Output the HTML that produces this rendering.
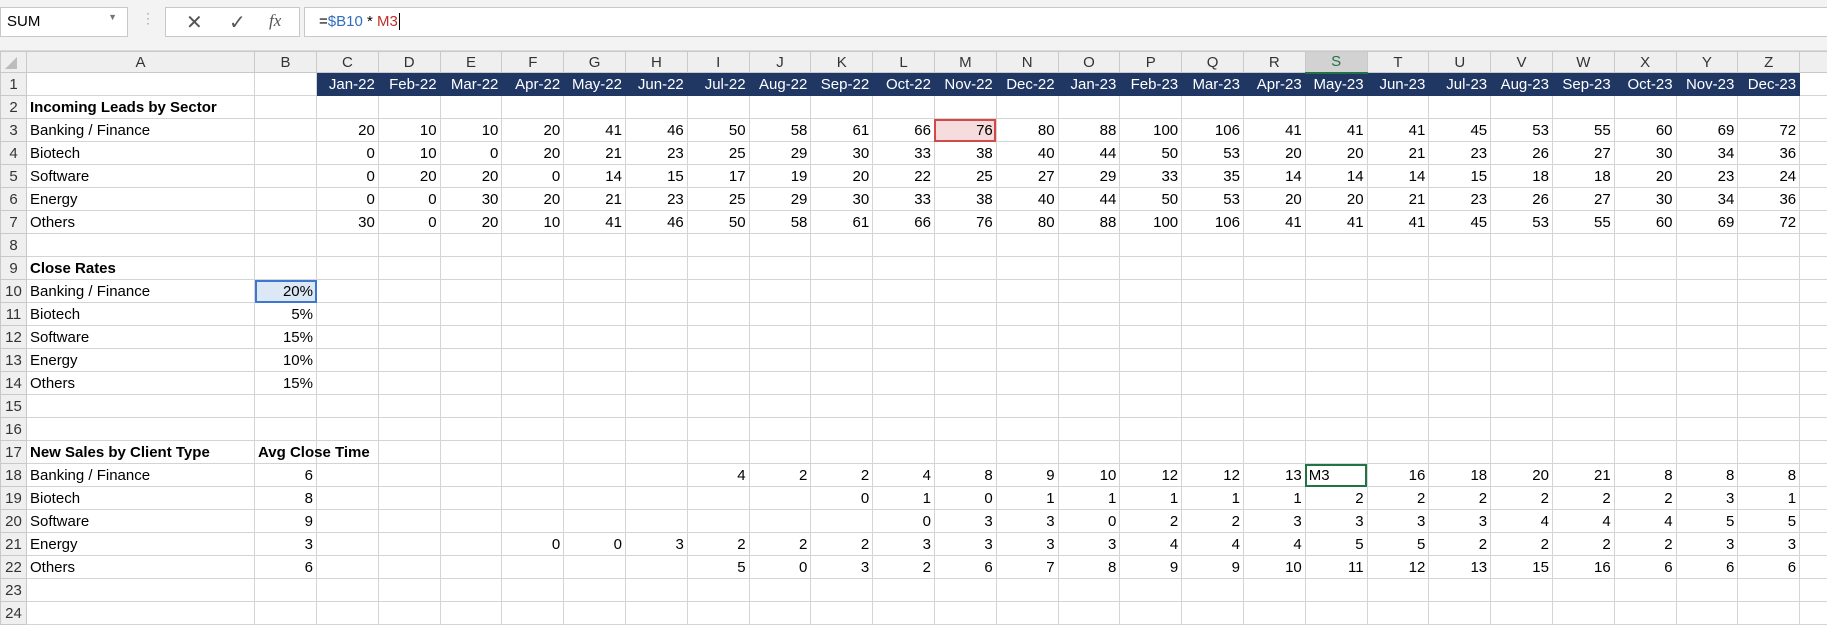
<!DOCTYPE html>
<html><head><meta charset="utf-8"><style>
*{margin:0;padding:0;box-sizing:border-box}
body{width:1827px;height:625px;overflow:hidden;background:#fff;font-family:"Liberation Sans",Calibri,sans-serif;font-size:15px;color:#000;position:relative}
#fb{position:absolute;left:0;top:0;width:1827px;height:51px;background:#f3f3f3;border-bottom:1px solid #dadada}
.box{position:absolute;background:#fff;border:1px solid #c8c8c8;height:30px;top:7px}
table{position:absolute;left:0;top:51px;border-collapse:collapse;table-layout:fixed;width:1827px}
td{border:1px solid #d4d4d4;height:23px;padding:0 3px;white-space:nowrap;overflow:hidden;text-align:right;line-height:21px}
tr.h td{height:21px;line-height:19px;background:#efefef;color:#333;text-align:center;border-color:#c9c9c9}
td.r{background:#efefef;color:#333;text-align:center;padding:0;border-color:#c9c9c9}
td.t{text-align:left}
td.b{font-weight:bold;text-align:left}
td.d{background:#203764;color:#fff;border-color:#203764}
</style></head><body>
<div id="fb">
<div class="box" style="left:0;width:128px"><span style="position:absolute;left:6px;top:5px">SUM</span><span style="position:absolute;right:10px;top:4px;font-size:9px;color:#777">▼</span></div>
<span style="position:absolute;left:141px;top:10px;color:#aaa;font-size:14px">⋮</span>
<div class="box" style="left:165px;width:135px"><span style="position:absolute;left:20px;top:2px;font-size:20px;color:#555">✕</span><span style="position:absolute;left:63px;top:2px;font-size:20px;color:#555">✓</span><span style="position:absolute;left:103px;top:3px;font-size:17px;color:#555;font-style:italic;font-family:'Liberation Serif',serif">fx</span></div>
<div class="box" style="left:304px;width:1530px"><span style="position:absolute;left:14px;top:5px">=<span style="color:#2f6cc0">$B10</span> * <span style="color:#c0302a">M3</span><span style="border-left:1px solid #000;margin-left:1px"></span></span></div>
</div>
<table>
<colgroup><col style="width:26px"><col style="width:228px"><col style="width:62px"><col span="24" style="width:61.8px"><col style="width:28px"></colgroup>
<tr class="h"><td style="padding:0"><svg width="20" height="17" style="display:block"><polygon points="16,3 16,15 4,15" fill="#bdbdbd"/></svg></td><td>A</td><td>B</td><td>C</td><td>D</td><td>E</td><td>F</td><td>G</td><td>H</td><td>I</td><td>J</td><td>K</td><td>L</td><td>M</td><td>N</td><td>O</td><td>P</td><td>Q</td><td>R</td><td style="background:#d2d2d2;border-bottom:2px solid #217346;color:#217346">S</td><td>T</td><td>U</td><td>V</td><td>W</td><td>X</td><td>Y</td><td>Z</td><td></td></tr>
<tr><td class="r">1</td><td></td><td></td><td class="d">Jan-22</td><td class="d">Feb-22</td><td class="d">Mar-22</td><td class="d">Apr-22</td><td class="d">May-22</td><td class="d">Jun-22</td><td class="d">Jul-22</td><td class="d">Aug-22</td><td class="d">Sep-22</td><td class="d">Oct-22</td><td class="d">Nov-22</td><td class="d">Dec-22</td><td class="d">Jan-23</td><td class="d">Feb-23</td><td class="d">Mar-23</td><td class="d">Apr-23</td><td class="d">May-23</td><td class="d">Jun-23</td><td class="d">Jul-23</td><td class="d">Aug-23</td><td class="d">Sep-23</td><td class="d">Oct-23</td><td class="d">Nov-23</td><td class="d">Dec-23</td><td></td></tr>
<tr><td class="r">2</td><td class="b">Incoming Leads by Sector</td><td></td><td></td><td></td><td></td><td></td><td></td><td></td><td></td><td></td><td></td><td></td><td></td><td></td><td></td><td></td><td></td><td></td><td></td><td></td><td></td><td></td><td></td><td></td><td></td><td></td><td></td></tr>
<tr><td class="r">3</td><td class="t">Banking / Finance</td><td></td><td>20</td><td>10</td><td>10</td><td>20</td><td>41</td><td>46</td><td>50</td><td>58</td><td>61</td><td>66</td><td style="background:#f6dcdc;outline:2px solid #d04a4a;outline-offset:-2px">76</td><td>80</td><td>88</td><td>100</td><td>106</td><td>41</td><td>41</td><td>41</td><td>45</td><td>53</td><td>55</td><td>60</td><td>69</td><td>72</td><td></td></tr>
<tr><td class="r">4</td><td class="t">Biotech</td><td></td><td>0</td><td>10</td><td>0</td><td>20</td><td>21</td><td>23</td><td>25</td><td>29</td><td>30</td><td>33</td><td>38</td><td>40</td><td>44</td><td>50</td><td>53</td><td>20</td><td>20</td><td>21</td><td>23</td><td>26</td><td>27</td><td>30</td><td>34</td><td>36</td><td></td></tr>
<tr><td class="r">5</td><td class="t">Software</td><td></td><td>0</td><td>20</td><td>20</td><td>0</td><td>14</td><td>15</td><td>17</td><td>19</td><td>20</td><td>22</td><td>25</td><td>27</td><td>29</td><td>33</td><td>35</td><td>14</td><td>14</td><td>14</td><td>15</td><td>18</td><td>18</td><td>20</td><td>23</td><td>24</td><td></td></tr>
<tr><td class="r">6</td><td class="t">Energy</td><td></td><td>0</td><td>0</td><td>30</td><td>20</td><td>21</td><td>23</td><td>25</td><td>29</td><td>30</td><td>33</td><td>38</td><td>40</td><td>44</td><td>50</td><td>53</td><td>20</td><td>20</td><td>21</td><td>23</td><td>26</td><td>27</td><td>30</td><td>34</td><td>36</td><td></td></tr>
<tr><td class="r">7</td><td class="t">Others</td><td></td><td>30</td><td>0</td><td>20</td><td>10</td><td>41</td><td>46</td><td>50</td><td>58</td><td>61</td><td>66</td><td>76</td><td>80</td><td>88</td><td>100</td><td>106</td><td>41</td><td>41</td><td>41</td><td>45</td><td>53</td><td>55</td><td>60</td><td>69</td><td>72</td><td></td></tr>
<tr><td class="r">8</td><td></td><td></td><td></td><td></td><td></td><td></td><td></td><td></td><td></td><td></td><td></td><td></td><td></td><td></td><td></td><td></td><td></td><td></td><td></td><td></td><td></td><td></td><td></td><td></td><td></td><td></td><td></td></tr>
<tr><td class="r">9</td><td class="b">Close Rates</td><td></td><td></td><td></td><td></td><td></td><td></td><td></td><td></td><td></td><td></td><td></td><td></td><td></td><td></td><td></td><td></td><td></td><td></td><td></td><td></td><td></td><td></td><td></td><td></td><td></td><td></td></tr>
<tr><td class="r">10</td><td class="t">Banking / Finance</td><td style="background:#dde8f6;outline:2px solid #3c78d0;outline-offset:-2px">20%</td><td></td><td></td><td></td><td></td><td></td><td></td><td></td><td></td><td></td><td></td><td></td><td></td><td></td><td></td><td></td><td></td><td></td><td></td><td></td><td></td><td></td><td></td><td></td><td></td><td></td></tr>
<tr><td class="r">11</td><td class="t">Biotech</td><td>5%</td><td></td><td></td><td></td><td></td><td></td><td></td><td></td><td></td><td></td><td></td><td></td><td></td><td></td><td></td><td></td><td></td><td></td><td></td><td></td><td></td><td></td><td></td><td></td><td></td><td></td></tr>
<tr><td class="r">12</td><td class="t">Software</td><td>15%</td><td></td><td></td><td></td><td></td><td></td><td></td><td></td><td></td><td></td><td></td><td></td><td></td><td></td><td></td><td></td><td></td><td></td><td></td><td></td><td></td><td></td><td></td><td></td><td></td><td></td></tr>
<tr><td class="r">13</td><td class="t">Energy</td><td>10%</td><td></td><td></td><td></td><td></td><td></td><td></td><td></td><td></td><td></td><td></td><td></td><td></td><td></td><td></td><td></td><td></td><td></td><td></td><td></td><td></td><td></td><td></td><td></td><td></td><td></td></tr>
<tr><td class="r">14</td><td class="t">Others</td><td>15%</td><td></td><td></td><td></td><td></td><td></td><td></td><td></td><td></td><td></td><td></td><td></td><td></td><td></td><td></td><td></td><td></td><td></td><td></td><td></td><td></td><td></td><td></td><td></td><td></td><td></td></tr>
<tr><td class="r">15</td><td></td><td></td><td></td><td></td><td></td><td></td><td></td><td></td><td></td><td></td><td></td><td></td><td></td><td></td><td></td><td></td><td></td><td></td><td></td><td></td><td></td><td></td><td></td><td></td><td></td><td></td><td></td></tr>
<tr><td class="r">16</td><td></td><td></td><td></td><td></td><td></td><td></td><td></td><td></td><td></td><td></td><td></td><td></td><td></td><td></td><td></td><td></td><td></td><td></td><td></td><td></td><td></td><td></td><td></td><td></td><td></td><td></td><td></td></tr>
<tr><td class="r">17</td><td class="b">New Sales by Client Type</td><td class="b" style="overflow:visible">Avg Close Time</td><td></td><td></td><td></td><td></td><td></td><td></td><td></td><td></td><td></td><td></td><td></td><td></td><td></td><td></td><td></td><td></td><td></td><td></td><td></td><td></td><td></td><td></td><td></td><td></td><td></td></tr>
<tr><td class="r">18</td><td class="t">Banking / Finance</td><td>6</td><td></td><td></td><td></td><td></td><td></td><td></td><td>4</td><td>2</td><td>2</td><td>4</td><td>8</td><td>9</td><td>10</td><td>12</td><td>12</td><td>13</td><td class="t" style="outline:2px solid #217346;outline-offset:-2px">M3</td><td>16</td><td>18</td><td>20</td><td>21</td><td>8</td><td>8</td><td>8</td><td></td></tr>
<tr><td class="r">19</td><td class="t">Biotech</td><td>8</td><td></td><td></td><td></td><td></td><td></td><td></td><td></td><td></td><td>0</td><td>1</td><td>0</td><td>1</td><td>1</td><td>1</td><td>1</td><td>1</td><td>2</td><td>2</td><td>2</td><td>2</td><td>2</td><td>2</td><td>3</td><td>1</td><td></td></tr>
<tr><td class="r">20</td><td class="t">Software</td><td>9</td><td></td><td></td><td></td><td></td><td></td><td></td><td></td><td></td><td></td><td>0</td><td>3</td><td>3</td><td>0</td><td>2</td><td>2</td><td>3</td><td>3</td><td>3</td><td>3</td><td>4</td><td>4</td><td>4</td><td>5</td><td>5</td><td></td></tr>
<tr><td class="r">21</td><td class="t">Energy</td><td>3</td><td></td><td></td><td></td><td>0</td><td>0</td><td>3</td><td>2</td><td>2</td><td>2</td><td>3</td><td>3</td><td>3</td><td>3</td><td>4</td><td>4</td><td>4</td><td>5</td><td>5</td><td>2</td><td>2</td><td>2</td><td>2</td><td>3</td><td>3</td><td></td></tr>
<tr><td class="r">22</td><td class="t">Others</td><td>6</td><td></td><td></td><td></td><td></td><td></td><td></td><td>5</td><td>0</td><td>3</td><td>2</td><td>6</td><td>7</td><td>8</td><td>9</td><td>9</td><td>10</td><td>11</td><td>12</td><td>13</td><td>15</td><td>16</td><td>6</td><td>6</td><td>6</td><td></td></tr>
<tr><td class="r">23</td><td></td><td></td><td></td><td></td><td></td><td></td><td></td><td></td><td></td><td></td><td></td><td></td><td></td><td></td><td></td><td></td><td></td><td></td><td></td><td></td><td></td><td></td><td></td><td></td><td></td><td></td><td></td></tr>
<tr><td class="r">24</td><td></td><td></td><td></td><td></td><td></td><td></td><td></td><td></td><td></td><td></td><td></td><td></td><td></td><td></td><td></td><td></td><td></td><td></td><td></td><td></td><td></td><td></td><td></td><td></td><td></td><td></td><td></td></tr>
</table>
</body></html>
